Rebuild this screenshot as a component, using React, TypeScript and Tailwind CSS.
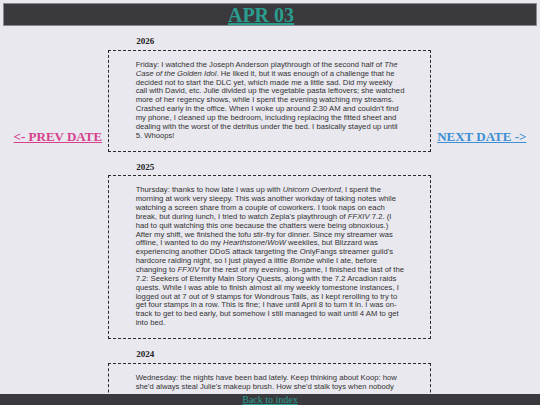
import React from "react";

type Entry = { year: string; lines: React.ReactNode[] };

const entries: Entry[] = [
  {
    year: "2026",
    lines: [
      <>Friday: I watched the Joseph Anderson playthrough of the second half of <i>The</i></>,
      <><i>Case of the Golden Idol</i>. He liked it, but it was enough of a challenge that he</>,
      "decided not to start the DLC yet, which made me a little sad. Did my weekly",
      "call with David, etc. Julie divided up the vegetable pasta leftovers; she watched",
      "more of her regency shows, while I spent the evening watching my streams.",
      "Crashed early in the office. When I woke up around 2:30 AM and couldn't find",
      "my phone, I cleaned up the bedroom, including replacing the fitted sheet and",
      "dealing with the worst of the detritus under the bed. I basically stayed up until",
      "5. Whoops!",
    ],
  },
  {
    year: "2025",
    lines: [
      <>Thursday: thanks to how late I was up with <i>Unicorn Overlord</i>, I spent the</>,
      "morning at work very sleepy. This was another workday of taking notes while",
      "watching a screen share from a couple of coworkers. I took naps on each",
      <>break, but during lunch, I tried to watch Zepla's playthrough of <i>FFXIV</i> 7.2. (I</>,
      "had to quit watching this one because the chatters were being obnoxious.)",
      "After my shift, we finished the tofu stir-fry for dinner. Since my streamer was",
      <>offline, I wanted to do my <i>Hearthstone</i>/<i>WoW</i> weeklies, but Blizzard was</>,
      "experiencing another DDoS attack targeting the OnlyFangs streamer guild's",
      <>hardcore raiding night, so I just played a little <i>Bombe</i> while I ate, before</>,
      <>changing to <i>FFXIV</i> for the rest of my evening. In-game, I finished the last of the</>,
      "7.2: Seekers of Eternity Main Story Quests, along with the 7.2 Arcadion raids",
      "quests. While I was able to finish almost all my weekly tomestone instances, I",
      "logged out at 7 out of 9 stamps for Wondrous Tails, as I kept rerolling to try to",
      "get four stamps in a row. This is fine; I have until April 8 to turn it in. I was on-",
      "track to get to bed early, but somehow I still managed to wait until 4 AM to get",
      "into bed.",
    ],
  },
  {
    year: "2024",
    lines: [
      "Wednesday: the nights have been bad lately. Keep thinking about Koop: how",
      "she'd always steal Julie's makeup brush. How she'd stalk toys when nobody",
    ],
  },
];

export default function App() {
  return (
    <div className="min-h-screen bg-[#e9e8ee] p-[3px] font-['Liberation_Serif',serif]">
      {/* top bar with the date */}
      <header className="h-[23px] border border-[#8a898e] bg-[#3a393e] flex items-center justify-center pr-[18px]">
        <a
          href="#"
          className="text-[20px] font-bold leading-none text-[#2a9d8f] underline"
        >
          APR 03
        </a>
      </header>

      <div className="flex justify-center items-start gap-[6px]">
        <a
          href="#"
          className="mt-[103px] text-[13px] font-bold leading-[15px] text-[#d6408c] underline whitespace-nowrap"
        >
          &lt;- PREV DATE
        </a>

        <main className="w-[323px] shrink-0">
          {entries.map((e) => (
            <section key={e.year}>
              <h2 className="mt-[10px] mb-[2.5px] pl-[28px] text-[9px] font-bold leading-[11.4px] text-[#222]">
                {e.year}
              </h2>
              <div className="border-[1.5px] border-dashed border-[#2a2a2a] pl-[26.5px] pr-[12px] py-[10px] font-['Liberation_Sans',sans-serif] text-[7.7px] leading-[8.85px] text-[#333]">
                {e.lines.map((line, i) => (
                  <span key={i} className="block whitespace-nowrap">
                    {line}
                  </span>
                ))}
              </div>
            </section>
          ))}
        </main>

        <a
          href="#"
          className="mt-[103px] text-[13px] font-bold leading-[15px] text-[#3b8fd4] underline whitespace-nowrap"
        >
          NEXT DATE -&gt;
        </a>
      </div>

      {/* bottom bar */}
      <footer className="fixed bottom-0 inset-x-0 h-[11px] bg-[#3a393e] flex justify-center">
        <a
          href="#"
          className="text-[10px] leading-[11px] text-[#2a9d8f] underline"
        >
          Back to index
        </a>
      </footer>
    </div>
  );
}
